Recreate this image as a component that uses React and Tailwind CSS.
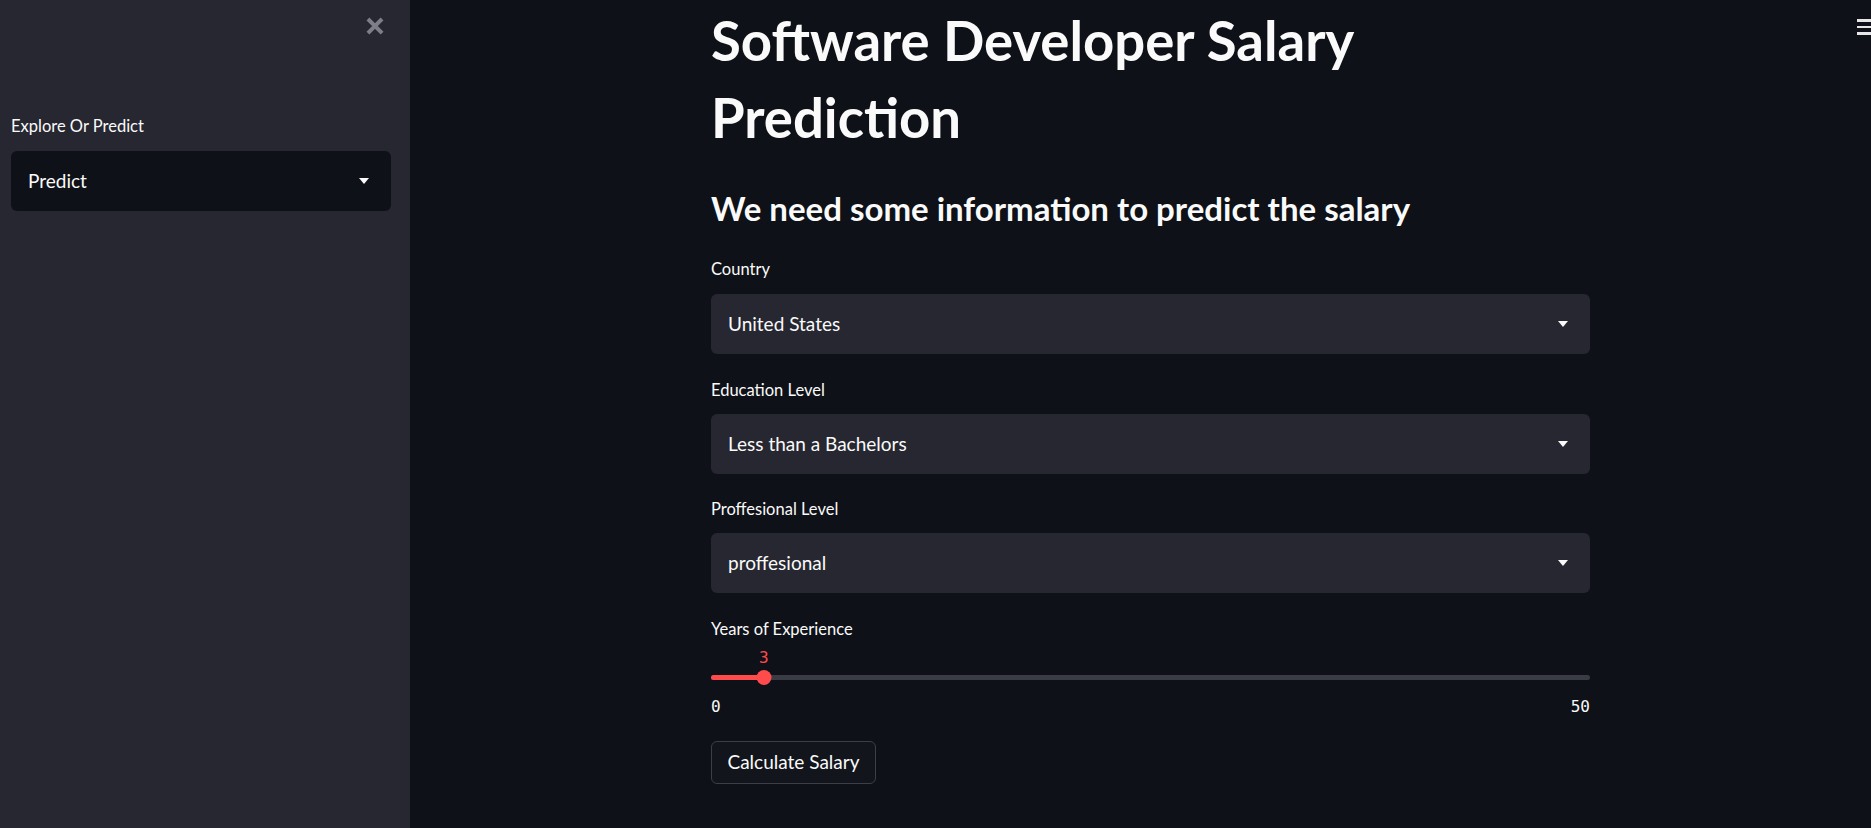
import { useState } from 'react';

const sans = { fontFamily: 'Lato, "Noto Sans", sans-serif' };

function Caret() {
  return (
    <svg width="10" height="6" viewBox="0 0 10 6" className="shrink-0">
      <path d="M0 0h10L5 6z" fill="#fafafa" />
    </svg>
  );
}

function SelectBox({ value, dark }) {
  return (
    <div
      className={`flex h-[60px] items-center justify-between rounded-md pl-[17px] pr-[22px] text-[19px] text-[#fafafa] ${
        dark ? 'bg-[#0e1117]' : 'bg-[#262730]'
      }`}
    >
      <span>{value}</span>
      <Caret />
    </div>
  );
}

function Label({ children, className = '' }) {
  return <div className={`h-6 text-[16.5px] leading-6 text-[#fafafa] ${className}`}>{children}</div>;
}

export default function App() {
  const [years] = useState(3);
  const pct = (years / 50) * 100;

  return (
    <div className="relative flex h-[828px] w-full overflow-hidden bg-[#0e1117]" style={sans}>
      {/* sidebar */}
      <aside className="flex w-[410px] shrink-0 flex-col bg-[#262730] px-[11px]">
        <div className="flex h-[54px] justify-end pr-[15px] pt-[17px]">
          <svg width="18" height="18" viewBox="0 0 16 16">
            <path d="M3 3l10 10M13 3L3 13" stroke="#7d7e87" strokeWidth="3.6" strokeLinecap="square" />
          </svg>
        </div>
        <Label className="mt-[60px]">Explore Or Predict</Label>
        <div className="mt-[13px] w-[380px]">
          <SelectBox value="Predict" dark />
        </div>
      </aside>

      {/* main */}
      <main className="flex-1">
        <div className="ml-[301px] w-[879px] pt-[2px] text-[#fafafa]">
          <h1 className="text-[54.5px] font-bold leading-[77px]">
            Software Developer Salary
            <br />
            Prediction
          </h1>
          <h3 className="mt-[32px] text-[33px] font-bold leading-[40px]">
            We need some information to predict the salary
          </h3>

          <Label className="mt-[29px]">Country</Label>
          <div className="mt-[13px]">
            <SelectBox value="United States" />
          </div>

          <Label className="mt-[24px]">Education Level</Label>
          <div className="mt-[12px]">
            <SelectBox value="Less than a Bachelors" />
          </div>

          <Label className="mt-[23px]">Proffesional Level</Label>
          <div className="mt-[12px]">
            <SelectBox value="proffesional" />
          </div>

          <Label className="mt-[24px]">Years of Experience</Label>

          {/* slider */}
          <div className="relative mt-[7px] h-[37px]">
            <div
              className="absolute top-0 h-5 -translate-x-1/2 text-[16px] leading-5 text-[#ff4b4b]"
              style={{ left: `${pct}%`, fontFamily: '"DejaVu Sans Mono", monospace' }}
            >
              {years}
            </div>
            <div className="absolute left-0 right-0 top-[27px] h-[5px] rounded-full bg-[#3a3b44]">
              <div className="h-full rounded-full bg-[#ff4b4b]" style={{ width: `${pct}%` }} />
            </div>
            <div
              className="absolute top-[22px] h-[15px] w-[15px] -translate-x-1/2 rounded-full bg-[#ff4b4b]"
              style={{ left: `${pct}%` }}
            />
          </div>
          <div
            className="mt-[12px] flex h-5 justify-between text-[16px] leading-5 text-[#fafafa]"
            style={{ fontFamily: '"DejaVu Sans Mono", monospace' }}
          >
            <span>0</span>
            <span>50</span>
          </div>

          <button className="mt-[24px] h-[43px] w-[165px] rounded-md border border-[#3d3f48] bg-[#12151c] text-[19px] text-[#fafafa]">
            Calculate Salary
          </button>
        </div>
      </main>

      {/* header menu */}
      <div className="absolute right-[-6px] top-[19px] flex w-5 flex-col gap-[4px]">
        <div className="h-[2.5px] bg-[#e6e6e6]" />
        <div className="h-[2.5px] bg-[#e6e6e6]" />
        <div className="h-[2.5px] bg-[#e6e6e6]" />
      </div>
    </div>
  );
}
